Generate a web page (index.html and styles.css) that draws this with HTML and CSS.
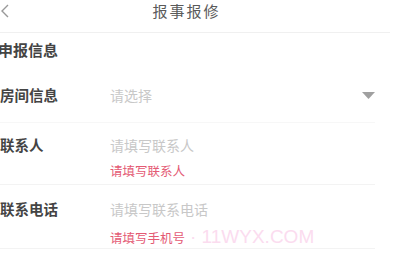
FILE: index.html
```html
<!DOCTYPE html>
<html lang="zh-CN">
<head>
<meta charset="utf-8">
<title>报事报修</title>
<link rel="stylesheet" href="styles.css">
</head>
<body>
<div class="page">
  <header class="nav">
    <svg class="back" width="9" height="14" viewBox="0 0 9 14"><path d="M8 1 L2 7 L8 13" fill="none" stroke="#999" stroke-width="1.4"/></svg>
    <div class="title">报事报修</div>
  </header>
  <div class="section-head">申报信息</div>
  <div class="row row-room">
    <div class="label">房间信息</div>
    <div class="field">
      <span class="placeholder">请选择</span>
      <svg class="caret" width="13" height="7" viewBox="0 0 13 7"><path d="M0 0 H13 L6.5 7 Z" fill="#a0a0a0"/></svg>
    </div>
  </div>
  <div class="row row-contact">
    <div class="label">联系人</div>
    <div class="field-col">
      <span class="placeholder">请填写联系人</span>
      <span class="error">请填写联系人</span>
    </div>
  </div>
  <div class="row row-phone">
    <div class="label">联系电话</div>
    <div class="field-col">
      <span class="placeholder">请填写联系电话</span>
      <span class="error">请填写手机号<span class="mark">· 11WYX.COM</span></span>
    </div>
  </div>
</div>
</body>
</html>
```
FILE: styles.css
```css
html, body {
  margin: 0;
  padding: 0;
  background: #fff;
}
body {
  width: 416px;
  height: 259px;
  overflow: hidden;
  font-family: "Noto Sans CJK SC", "Noto Sans", sans-serif;
  color: #333;
}
.page {
  width: 416px;
}
.nav {
  display: flex;
  align-items: center;
  width: 390px;
  height: 22px;
  padding-bottom: 10px;
  border-bottom: 1px solid #f0f0f0;
}
.back {
  flex: none;
}
.title {
  flex: 1;
  margin-right: 26px;
  text-align: center;
  font-size: 15px;
  letter-spacing: 2px;
  line-height: 20px;
  color: #5a5a5a;
}
.section-head {
  margin-left: -2px;
  padding: 7px 0;
  font-size: 15px;
  line-height: 20px;
  font-weight: bold;
  color: #444;
}
.row {
  display: grid;
  grid-template-columns: 110px 1fr;
  align-items: start;
  width: 375px;
  border-bottom: 1px solid #f3f3f3;
}
.row-room {
  padding: 18px 0 17px;
  border-bottom-color: #f7f7f7;
}
.row-contact {
  padding: 12px 0 5px;
}
.row-phone {
  padding: 14px 0 2px;
}
.label {
  font-size: 14.5px;
  line-height: 20px;
  font-weight: bold;
  color: #444;
}
.field {
  display: flex;
  align-items: center;
  justify-content: space-between;
  height: 20px;
}
.field-col {
  display: flex;
  flex-direction: column;
  gap: 8px;
}
.row-phone .field-col {
  gap: 10px;
}
.placeholder {
  font-size: 14px;
  line-height: 20px;
  color: #c8c8c8;
}
.caret {
  flex: none;
}
.error {
  font-size: 12.5px;
  line-height: 16px;
  color: #e45a74;
  white-space: nowrap;
}
.mark {
  margin-left: 5px;
  font-family: "Liberation Sans", sans-serif;
  font-size: 19px;
  line-height: 16px;
  color: #fbdcef;
}
```
